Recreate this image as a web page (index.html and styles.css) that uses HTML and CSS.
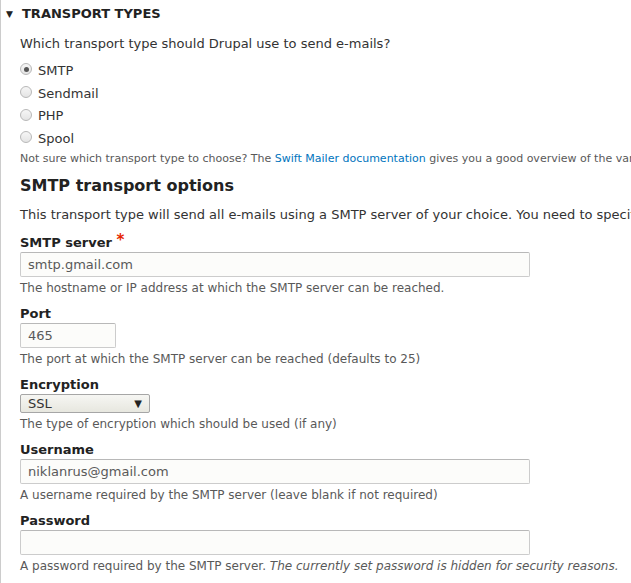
FILE: index.html
```html
<!DOCTYPE html>
<html>
<head>
<meta charset="utf-8">
<link rel="stylesheet" href="styles.css">
</head>
<body>
<div class="fieldset">
  <div class="summary"><span class="tri">▼</span>TRANSPORT TYPES</div>
  <div class="content">
    <p class="question">Which transport type should Drupal use to send e-mails?</p>
    <div class="radios">
      <div class="radio"><span class="dot checked"></span>SMTP</div>
      <div class="radio"><span class="dot"></span>Sendmail</div>
      <div class="radio"><span class="dot"></span>PHP</div>
      <div class="radio"><span class="dot"></span>Spool</div>
    </div>
    <div class="note">Not sure which transport type to choose? The <a href="#">Swift Mailer documentation</a> gives you a good overview of the various transport types.</div>
    <h2 class="heading">SMTP transport options</h2>
    <p class="intro">This transport type will send all e-mails using a SMTP server of your choice. You need to specify which SMTP server to use.</p>

    <div class="item first">
      <div class="label">SMTP server <span class="req">*</span></div>
      <div class="input wide">smtp.gmail.com</div>
      <div class="desc">The hostname or IP address at which the SMTP server can be reached.</div>
    </div>
    <div class="item">
      <div class="label">Port</div>
      <div class="input short">465</div>
      <div class="desc">The port at which the SMTP server can be reached (defaults to 25)</div>
    </div>
    <div class="item">
      <div class="label">Encryption</div>
      <div class="select">SSL<span class="arrow">▼</span></div>
      <div class="desc">The type of encryption which should be used (if any)</div>
    </div>
    <div class="item">
      <div class="label">Username</div>
      <div class="input wide">niklanrus@gmail.com</div>
      <div class="desc">A username required by the SMTP server (leave blank if not required)</div>
    </div>
    <div class="item">
      <div class="label">Password</div>
      <div class="input wide"></div>
      <div class="desc">A password required by the SMTP server. <em>The currently set password is hidden for security reasons.</em></div>
    </div>
  </div>
</div>
</body>
</html>
```
FILE: styles.css
```css
html, body {
  margin: 0;
  padding: 0;
  background: #fff;
  overflow: hidden;
}
body {
  font-family: "DejaVu Sans", sans-serif;
  color: #333;
  font-size: 13px;
  width: 631px;
  height: 583px;
}
.fieldset {
  border-left: 1px solid #ccc;
  height: 583px;
  box-sizing: border-box;
  overflow: hidden;
}
.summary {
  font-weight: bold;
  font-size: 13px;
  color: #222;
  text-transform: uppercase;
  padding: 5px 0 0 5px;
  height: 18px;
  line-height: 18px;
}
.tri {
  font-size: 9px;
  display: inline-block;
  width: 16px;
  vertical-align: 1px;
}
.content {
  padding: 0 0 0 19px;
}
.question {
  margin: 12px 0 0;
  line-height: 18px;
}
.radios {
  margin-top: 6px;
}
.radio {
  display: flex;
  align-items: center;
  height: 22.7px;
  color: #333;
}
.dot {
  width: 10px;
  height: 10px;
  border-radius: 50%;
  border: 1px solid #b8b8b8;
  background: linear-gradient(#f6f6f6, #e4e4e4);
  margin-right: 6px;
  box-sizing: content-box;
  position: relative;
  top: -1px;
}
.dot.checked::after {
  content: "";
  position: absolute;
  left: 2.5px;
  top: 2.5px;
  width: 5px;
  height: 5px;
  border-radius: 50%;
  background: #555;
}
.note {
  font-size: 11px;
  color: #595959;
  line-height: 14px;
  white-space: nowrap;
  margin-top: 2px;
}
.note a {
  color: #0074bd;
  text-decoration: none;
}
.desc {
  font-size: 12px;
  color: #595959;
  line-height: 14px;
  margin-top: 4px;
  white-space: nowrap;
}
.heading {
  font-size: 16px;
  font-weight: bold;
  color: #222;
  margin: 10px 0 0;
  line-height: 20px;
}
.intro {
  margin: 10px 0 0;
  line-height: 18px;
  white-space: nowrap;
}
.item {
  margin-top: 11px;
}
.label {
  font-weight: bold;
  color: #222;
  line-height: 16px;
  height: 16px;
}
.first .label {
  margin-bottom: 1px;
}
.req {
  color: #e62600;
  font-size: 15px;
  line-height: 10px;
  vertical-align: 2px;
}
.input {
  box-sizing: border-box;
  height: 25px;
  border: 1px solid #ccc;
  border-top-color: #b8b8b8;
  border-radius: 2px;
  background: #fcfcfa;
  padding: 0 7px;
  line-height: 23px;
  color: #595959;
  margin-top: 1px;
}
.wide {
  width: 510px;
}
.short {
  width: 96px;
}
.select {
  box-sizing: border-box;
  width: 130px;
  height: 19px;
  border: 1px solid #a6a6a6;
  border-radius: 2px;
  background: linear-gradient(#f6f6f3, #e7e7df);
  padding: 0 7px;
  line-height: 17px;
  color: #333;
  display: flex;
  justify-content: space-between;
  margin-top: 1px;
}
.arrow {
  font-size: 10px;
  color: #222;
}
```
